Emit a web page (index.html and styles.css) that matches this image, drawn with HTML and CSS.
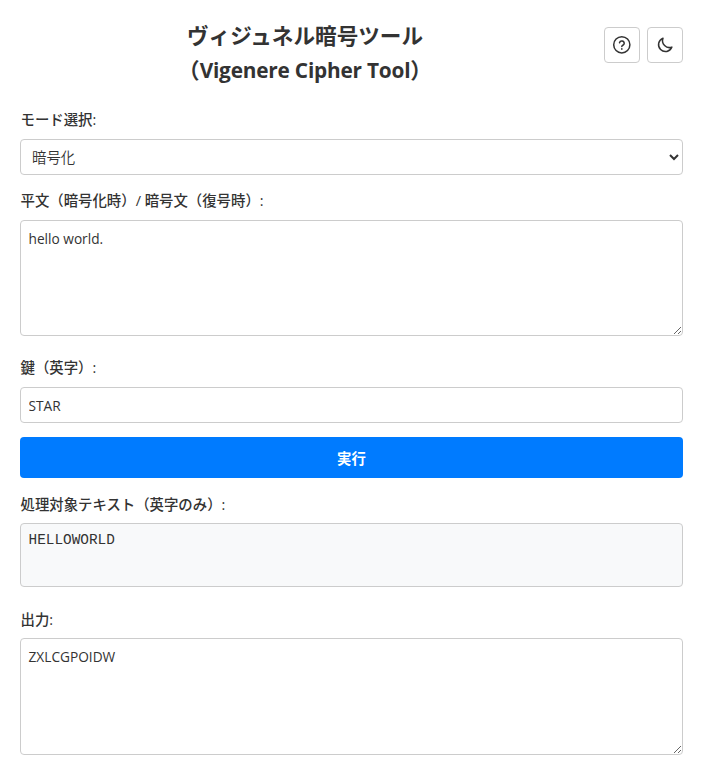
FILE: index.html
```html
<!DOCTYPE html>
<html lang="ja">
<head>
<meta charset="utf-8">
<title>ヴィジュネル暗号ツール</title>
<link rel="stylesheet" href="styles.css">
</head>
<body>
<header class="header">
  <h1 class="title">ヴィジュネル暗号ツール<br>（<span class="title-en">Vigenere Cipher Tool</span>）</h1>
  <div class="actions">
    <button class="icon-button" type="button" aria-label="ヘルプ"><svg width="20" height="20" viewBox="0 0 20 20" fill="none" stroke="currentColor" stroke-width="1.5" stroke-linecap="round"><circle cx="9.8" cy="9.8" r="8.1"/><path d="M7.5 7.8a2.4 2.4 0 0 1 4.7.7c0 1.6-2.4 1.8-2.4 2.9"/><circle cx="9.8" cy="13.9" r=".85" fill="currentColor" stroke="none"/></svg></button>
    <button class="icon-button" type="button" aria-label="テーマ"><svg width="18" height="18" viewBox="0 0 18 18" fill="none" stroke="currentColor" stroke-width="1.5" stroke-linejoin="round"><path d="M7 2.2a6.9 6.9 0 1 0 8.9 8.9A6.9 6.9 0 0 1 7 2.2z"/></svg></button>
  </div>
</header>
<main class="form">
  <div class="group">
    <label class="label" for="mode">モード選択:</label>
    <select class="field select" id="mode"><option>暗号化</option></select>
  </div>
  <div class="group">
    <label class="label" for="source">平文（暗号化時）/ 暗号文（復号時）:</label>
    <textarea class="field area" id="source" spellcheck="false">hello world.</textarea>
  </div>
  <div class="group after-area">
    <label class="label" for="key">鍵（英字）:</label>
    <input class="field input" id="key" type="text" value="STAR">
  </div>
  <button class="submit" type="button">実行</button>
  <div class="group">
    <div class="label result-label">処理対象テキスト（英字のみ）:</div>
    <div class="field processed">HELLOWORLD</div>
  </div>
  <div class="group after-area">
    <label class="label result-label" for="output">出力:</label>
    <textarea class="field area output" id="output" spellcheck="false">ZXLCGPOIDW</textarea>
  </div>
</main>
</body>
</html>
```
FILE: styles.css
```css
* { box-sizing: border-box; }
body {
  margin: 0;
  padding: 18px 18px 0 20px;
  background: #fff;
  color: #333;
  font-family: "Open Sans", "Noto Sans CJK JP", sans-serif;
  font-size: 14.4px;
  overflow: hidden;
}
.header { display: flex; height: 84px; }
.title {
  flex: 1;
  margin: 0;
  padding-right: 14px;
  font-family: "Noto Sans CJK JP", sans-serif;
  font-size: 21.6px;
  line-height: 34px;
  font-weight: 700;
  text-align: center;
}
.title-en { font-family: "Open Sans", sans-serif; font-size: 20.8px; letter-spacing: -0.2px; }
.actions { display: flex; gap: 7px; padding-top: 9px; }
.icon-button {
  display: flex;
  align-items: center;
  justify-content: center;
  width: 36px;
  height: 36px;
  padding: 0;
  color: #333;
  background: #fff;
  border: 1px solid #ccc;
  border-radius: 4px;
}
.form { display: flex; flex-direction: column; }
.group + .group, .submit + .group { margin-top: 8px; }
.group + .after-area { margin-top: 14px; }
.label { display: block; height: 37px; padding: 8px 0 0 0.5px; line-height: 20px; font-weight: 500; }
.result-label { padding-top: 9px; }
.field {
  display: block;
  width: 100%;
  margin: 0;
  border: 1px solid #ccc;
  border-radius: 4px;
  background: #fff;
  color: #333;
  font-family: inherit;
  font-size: 13.7px;
}
.select { height: 36px; padding: 0 0 0 7px; font-size: 14.4px; font-weight: 350; }
.area { height: 116px; padding: 8px 7.5px; line-height: 20px; resize: vertical; }
.area.output { height: 117px; }
.input { height: 36px; padding: 0 7.5px; }
.submit {
  height: 41px;
  margin-top: 14px;
  padding: 0;
  border: 0;
  border-radius: 4px;
  background: #007bff;
  color: #fff;
  font: 700 14.4px "Noto Sans CJK JP", sans-serif;
}
.processed { height: 64px; padding: 7px 7.5px; background: #f8f9fa; font: 14.4px/18px "Liberation Mono", monospace; }
```
